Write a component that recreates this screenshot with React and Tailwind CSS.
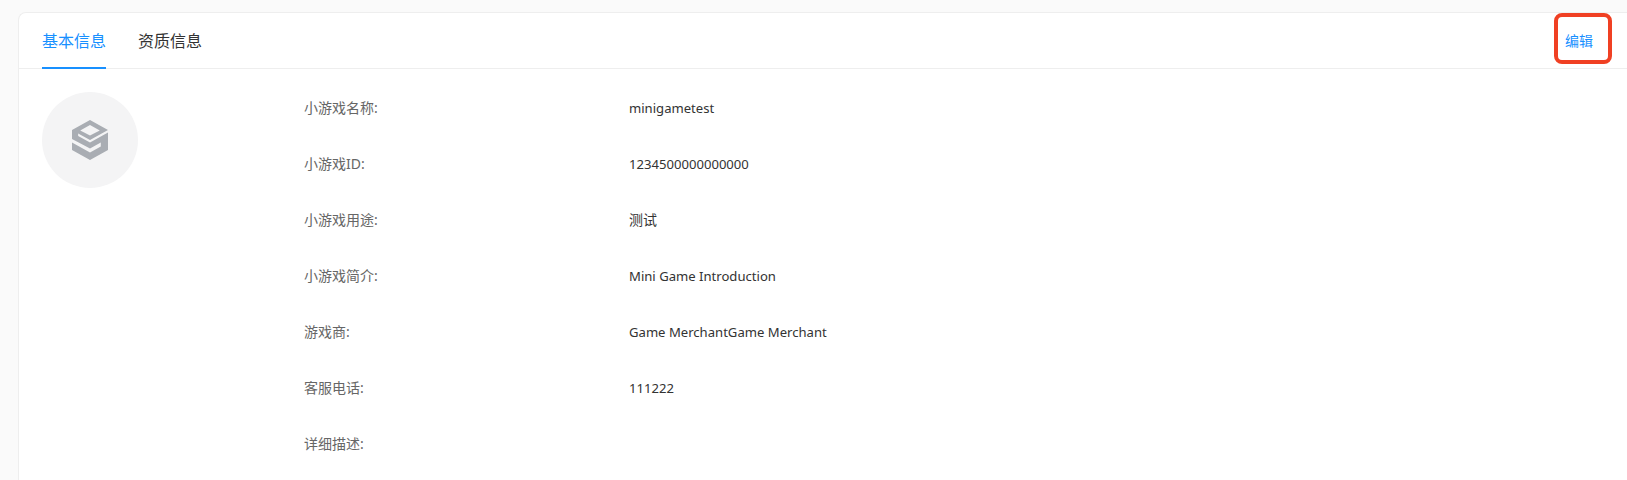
import React from 'react';

const rows = [
  { label: '小游戏名称', value: 'minigametest' },
  { label: '小游戏ID', value: '1234500000000000' },
  { label: '小游戏用途', value: '测试', cjk: true },
  { label: '小游戏简介', value: 'Mini Game Introduction' },
  { label: '游戏商', value: 'Game MerchantGame Merchant' },
  { label: '客服电话', value: '111222' },
  { label: '详细描述', value: '' },
];

// stacked box logo, top ring + S shaped band
const CubeIcon = () => (
  <svg width="36" height="40" viewBox="0 0 35 40" fill="#a9adb3" preserveAspectRatio="none">
    <path
      fillRule="evenodd"
      d="M17.5 0 L35 10 L17.5 20 L6 13.5 L6 16 L17.5 22.5 L35 12.5 L35 30 L17.5 40 L0 30 L0 22.5 L17.5 32.5 L28 26.5 L28 22.5 L17.5 28.5 L0 19 L0 10 Z M17.5 5 L8 10.5 L17.5 15.5 L27 10.5 Z"
    />
  </svg>
);

export default function App() {
  return (
    <div className="h-[480px] overflow-hidden bg-[#fafafa] pl-[18px] pt-3 font-['Noto_Sans','Noto_Sans_CJK_SC',sans-serif]">
      <div className="relative h-[520px] rounded-tl-lg border-t border-l border-[#eeeeee] bg-white">
        <div className="flex h-14 justify-between border-b border-[#eeeeee] pl-[23px] pr-[34px]">
          <div className="flex gap-8 text-base">
            <div className="-mb-px flex items-center border-b-2 border-[#1890ff] pt-px text-[#1890ff]">基本信息</div>
            <div className="flex items-center pt-px text-[#333333]">资质信息</div>
          </div>
          <button className="text-sm text-[#1890ff]">编辑</button>
        </div>
        <div className="flex pl-[23px] pt-[23px]">
          <div className="flex h-24 w-24 shrink-0 items-center justify-center rounded-full bg-[#f4f4f5]">
            <CubeIcon />
          </div>
          <div className="ml-[166px] flex flex-col pt-1.5">
            {rows.map((row) => (
              <div key={row.label} className="flex h-14 items-start leading-5">
                <span className="w-[325px] text-sm text-[#666666]">{row.label}:</span>
                <span className={row.cjk ? 'text-sm text-[#333333]' : 'text-[13.1px] text-[#333333]'}>{row.value}</span>
              </div>
            ))}
          </div>
        </div>
        <div className="absolute left-[1535px] top-0 h-[51px] w-[58px] rounded-lg border-4 border-[#f04023]" />
      </div>
    </div>
  );
}
